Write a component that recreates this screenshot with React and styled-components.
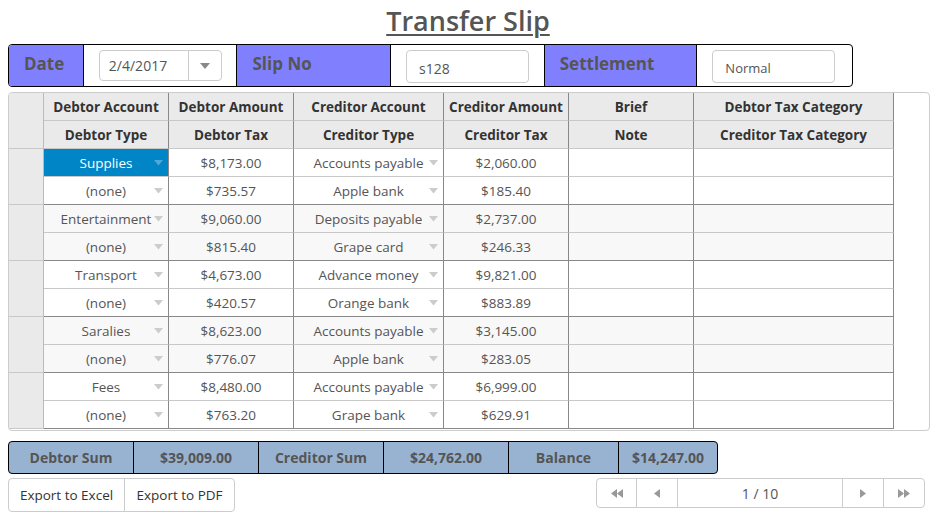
import React from 'react';
import styled, { createGlobalStyle } from 'styled-components';

const GlobalStyle = createGlobalStyle`
    body {
        margin: 0;
        background: #fff;
        font-family: "Open Sans", "Noto Sans", sans-serif;
        color: #555;
    }
`;

const Page = styled.div`
    width: 936px;
    padding: 0 8px;
    box-sizing: border-box;
`;

const Title = styled.h1`
    margin: 0;
    height: 44px;
    line-height: 41px;
    text-align: center;
    font-size: 27px;
    font-weight: 600;
    color: #555;
    text-decoration: underline;
    text-underline-offset: 3px;
    text-decoration-thickness: 2px;
`;

// top bar: Date / Slip No / Settlement
const HeaderBar = styled.div`
    display: flex;
    width: 845px;
    height: 43px;
    border: 1px solid #000;
    border-radius: 4px;
    box-sizing: border-box;
    overflow: hidden;
`;

const BarLabel = styled.div`
    width: ${(p) => p.w}px;
    background: #8080ff;
    border-right: 1px solid #000;
    box-sizing: border-box;
    padding: 7px 0 0 15px;
    font-size: 17px;
    font-weight: 700;
    color: #555;
`;

const BarField = styled.div`
    width: ${(p) => p.w}px;
    border-right: ${(p) => (p.last ? 'none' : '1px solid #000')};
    box-sizing: border-box;
    padding: 5px 0 0 15px;
`;

const TextBox = styled.div`
    width: 123px;
    height: 33px;
    border: 1px solid #ccc;
    border-radius: 4px;
    box-sizing: border-box;
    display: flex;
    align-items: center;
    padding: 3px 0 0 12px;
    font-size: ${(p) => (p.small ? 13 : 14)}px;
    color: #555;
`;

const DateBox = styled.div`
    width: 123px;
    height: 31px;
    border: 1px solid #ccc;
    border-radius: 4px;
    box-sizing: border-box;
    display: flex;
    font-size: 14px;
    color: #555;
`;

const DateText = styled.div`
    flex: 1;
    display: flex;
    align-items: center;
    padding-left: 9px;
`;

const DateButton = styled.div`
    width: 32px;
    border-left: 1px solid #ccc;
    display: flex;
    align-items: center;
    justify-content: center;
`;

const Caret = ({ color = '#888', w = 10 }) => (
    <svg width={w} height={w / 2 + 1} viewBox="0 0 10 6">
        <path d="M0 0 L10 0 L5 6 Z" fill={color} />
    </svg>
);

// data grid
const GridFrame = styled.div`
    margin-top: 5px;
    width: 922px;
    height: 339px;
    border: 1px solid #ccc;
    border-radius: 4px;
    box-sizing: border-box;
    overflow: hidden;
`;

const Grid = styled.div`
    display: grid;
    grid-template-columns: 35px 125px 125px 150px 125px 125px 200px;
    grid-auto-rows: 28px;
    width: 885px;
    font-size: 13.5px;
`;

const Corner = styled.div`
    grid-row: span 2;
    background: #eaeaea;
    border-right: 1px solid #bbb;
    border-bottom: 1px solid #c8c8c8;
`;

const RowHead = styled.div`
    grid-row: span 2;
    background: #eaeaea;
    border-right: 1px solid #bbb;
    border-bottom: 1px solid #c8c8c8;
`;

const HeadCell = styled.div`
    background: #eaeaea;
    border-right: 1px solid #888;
    border-bottom: 1px solid #c8c8c8;
    display: flex;
    align-items: center;
    justify-content: center;
    font-weight: 700;
    color: #333;
    white-space: nowrap;
`;

const Cell = styled.div`
    position: relative;
    background: ${(p) => (p.selected ? '#0085c7' : p.alt ? '#f8f8f8' : '#fff')};
    color: ${(p) => (p.selected ? '#fff' : '#555')};
    border-right: 1px solid #888;
    border-bottom: 1px solid ${(p) => (p.groupEnd ? '#888' : '#c8c8c8')};
    display: flex;
    align-items: center;
    justify-content: center;
    white-space: nowrap;
`;

const DropMark = styled.span`
    position: absolute;
    right: 5px;
    top: 11px;
    display: flex;
`;

// sums
const SumBar = styled.div`
    display: flex;
    margin-top: 10px;
    width: 710px;
    height: 33px;
    background: #98b3d1;
    border: 1px solid #000;
    border-radius: 4px;
    box-sizing: border-box;
    overflow: hidden;
`;

const SumCell = styled.div`
    width: ${(p) => p.w}px;
    border-right: ${(p) => (p.last ? 'none' : '1px solid #000')};
    box-sizing: border-box;
    display: flex;
    align-items: center;
    justify-content: center;
    font-size: 14px;
    font-weight: 700;
    color: #555;
`;

const Footer = styled.div`
    display: flex;
    justify-content: space-between;
    align-items: flex-start;
    margin-top: 4px;
    padding-right: 3px;
`;

const ButtonGroup = styled.div`
    display: flex;
    border: 1px solid #ccc;
    border-radius: 4px;
    height: 34px;
    box-sizing: border-box;
`;

const GroupButton = styled.div`
    width: ${(p) => p.w}px;
    box-sizing: border-box;
    border-right: ${(p) => (p.last ? 'none' : '1px solid #ccc')};
    display: flex;
    align-items: center;
    justify-content: center;
    font-size: 13.5px;
    color: #333;
`;

const Pager = styled.div`
    display: flex;
    border: 1px solid #ccc;
    border-radius: 4px;
    height: 30px;
    box-sizing: border-box;
`;

const PagerButton = styled.div`
    width: ${(p) => p.w}px;
    box-sizing: border-box;
    border-right: ${(p) => (p.last ? 'none' : '1px solid #ccc')};
    display: flex;
    align-items: center;
    justify-content: center;
    font-size: 14px;
    color: #555;
`;

const Tri = ({ dir = 'right', double }) => {
    const one = dir === 'right' ? 'M0 0 L6 4.5 L0 9 Z' : 'M6 0 L0 4.5 L6 9 Z';
    const two = dir === 'right' ? 'M6 0 L12 4.5 L6 9 Z' : 'M12 0 L6 4.5 L12 9 Z';
    return (
        <svg width={double ? 12 : 6} height="9" viewBox={`0 0 ${double ? 12 : 6} 9`}>
            <path d={one} fill="#999" />
            {double && <path d={two} fill="#999" />}
        </svg>
    );
};

const groups = [
    [['Supplies', '$8,173.00', 'Accounts payable', '$2,060.00'], ['(none)', '$735.57', 'Apple bank', '$185.40']],
    [['Entertainment', '$9,060.00', 'Deposits payable', '$2,737.00'], ['(none)', '$815.40', 'Grape card', '$246.33']],
    [['Transport', '$4,673.00', 'Advance money', '$9,821.00'], ['(none)', '$420.57', 'Orange bank', '$883.89']],
    [['Saralies', '$8,623.00', 'Accounts payable', '$3,145.00'], ['(none)', '$776.07', 'Apple bank', '$283.05']],
    [['Fees', '$8,480.00', 'Accounts payable', '$6,999.00'], ['(none)', '$763.20', 'Grape bank', '$629.91']],
];

const heads = [
    ['Debtor Account', 'Debtor Amount', 'Creditor Account', 'Creditor Amount', 'Brief', 'Debtor Tax Category'],
    ['Debtor Type', 'Debtor Tax', 'Creditor Type', 'Creditor Tax', 'Note', 'Creditor Tax Category'],
];

const DropCell = ({ children, ...rest }) => (
    <Cell {...rest}>
        {children}
        <DropMark>
            <Caret w={9} color={rest.selected ? '#4fa8d8' : '#ccc'} />
        </DropMark>
    </Cell>
);

export default function App() {
    return (
        <Page>
            <GlobalStyle />
            <Title>Transfer Slip</Title>

            <HeaderBar>
                <BarLabel w={75}>Date</BarLabel>
                <BarField w={154}>
                    <DateBox>
                        <DateText>2/4/2017</DateText>
                        <DateButton><Caret /></DateButton>
                    </DateBox>
                </BarField>
                <BarLabel w={154}>Slip No</BarLabel>
                <BarField w={154}>
                    <TextBox>s128</TextBox>
                </BarField>
                <BarLabel w={153}>Settlement</BarLabel>
                <BarField w={155} last>
                    <TextBox small>Normal</TextBox>
                </BarField>
            </HeaderBar>

            <GridFrame>
                <Grid>
                    <Corner />
                    {heads[0].map((h) => <HeadCell key={h}>{h}</HeadCell>)}
                    {heads[1].map((h) => <HeadCell key={h}>{h}</HeadCell>)}
                    {groups.map((g, gi) => (
                        <React.Fragment key={gi}>
                            <RowHead />
                            {g.map((r, ri) => {
                                const alt = gi % 2 === 1;
                                const end = ri === 1;
                                return (
                                    <React.Fragment key={ri}>
                                        <DropCell alt={alt} groupEnd={end} selected={gi === 0 && ri === 0}>{r[0]}</DropCell>
                                        <Cell alt={alt} groupEnd={end}>{r[1]}</Cell>
                                        <DropCell alt={alt} groupEnd={end}>{r[2]}</DropCell>
                                        <Cell alt={alt} groupEnd={end}>{r[3]}</Cell>
                                        <Cell alt={alt} groupEnd={end} />
                                        <Cell alt={alt} groupEnd={end} />
                                    </React.Fragment>
                                );
                            })}
                        </React.Fragment>
                    ))}
                </Grid>
            </GridFrame>

            <SumBar>
                <SumCell w={125}>Debtor Sum</SumCell>
                <SumCell w={125}>$39,009.00</SumCell>
                <SumCell w={125}>Creditor Sum</SumCell>
                <SumCell w={125}>$24,762.00</SumCell>
                <SumCell w={110}>Balance</SumCell>
                <SumCell w={98} last>$14,247.00</SumCell>
            </SumBar>

            <Footer>
                <ButtonGroup>
                    <GroupButton w={116}>Export to Excel</GroupButton>
                    <GroupButton w={109} last>Export to PDF</GroupButton>
                </ButtonGroup>
                <Pager>
                    <PagerButton w={40}><Tri dir="left" double /></PagerButton>
                    <PagerButton w={41}><Tri dir="left" /></PagerButton>
                    <PagerButton w={165}>1 / 10</PagerButton>
                    <PagerButton w={41}><Tri dir="right" /></PagerButton>
                    <PagerButton w={40} last><Tri dir="right" double /></PagerButton>
                </Pager>
            </Footer>
        </Page>
    );
}
